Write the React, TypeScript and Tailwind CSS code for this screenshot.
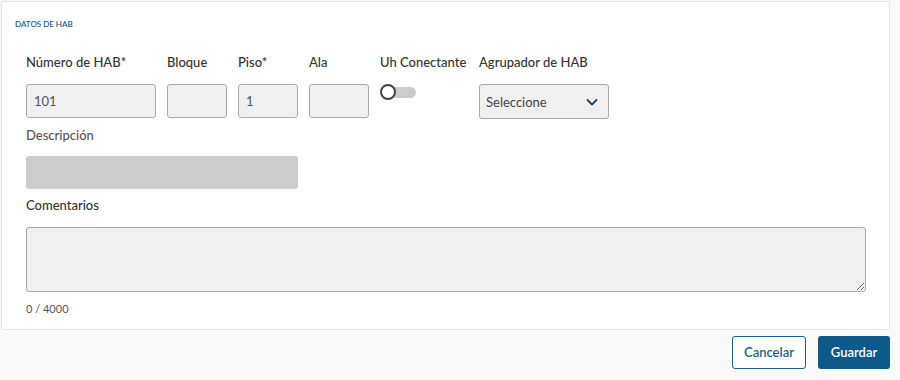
import { useState } from 'react';

const labelCls = 'block text-[13px] leading-[16px] font-medium text-[#333]';
const inputCls =
  'h-[34px] w-full rounded-[3px] border border-[#a9a9a9] bg-[#f0f0f0] px-[7px] text-[13px] text-[#555] outline-none';

function Field({ label, width, value }: { label: string; width: string; value?: string }) {
  return (
    <div className={width}>
      <label className={labelCls}>{label}</label>
      <input className={`mt-[14px] ${inputCls}`} defaultValue={value} />
    </div>
  );
}

export default function App() {
  const [connected, setConnected] = useState(false);
  const [comment, setComment] = useState('');

  return (
    <div
      className="h-[380px] w-[900px] bg-[#f9f9f9] pl-px pt-px"
      style={{ fontFamily: 'Lato, "Open Sans", sans-serif' }}
    >
      {/* Card */}
      <div className="h-[329px] w-[889px] rounded-[3px] border border-[#e3e3e3] bg-white pl-[13px] pt-[17px]">
        <p className="text-[8px] leading-[10px] font-semibold uppercase text-[#2b5b7f]">Datos de HAB</p>

        <div className="pl-[11px]">
          {/* Row 1 */}
          <div className="mt-[25px] flex gap-[11px]">
            <Field label="Número de HAB*" width="w-[130px]" value="101" />
            <Field label="Bloque" width="w-[60px]" />
            <Field label="Piso*" width="w-[60px]" value="1" />
            <Field label="Ala" width="w-[60px]" />
            <div className="w-[88px]">
              <label className={`${labelCls} whitespace-nowrap`}>Uh Conectante</label>
              <button
                type="button"
                onClick={() => setConnected(!connected)}
                className="relative mt-[14px] block h-[16px] w-[36px]"
              >
                <span className="absolute left-[6px] top-[3px] h-[11px] w-[30px] rounded-full bg-[#cccccc]" />
                <span
                  className={`absolute top-0 h-[16px] w-[16px] rounded-full border-2 border-[#444] bg-white ${
                    connected ? 'left-[20px]' : 'left-0'
                  }`}
                />
              </button>
            </div>
            <div className="w-[130px]">
              <label className={labelCls}>Agrupador de HAB</label>
              <div className="mt-[14px] flex h-[35px] items-center justify-between rounded-[3px] border border-[#a9a9a9] bg-[#f0f0f0] pl-[6px] pr-[10px] text-[13px] text-[#444]">
                <span className="pt-[2px]">Seleccione</span>
                <svg width="12" height="8" viewBox="0 0 12 8" fill="none">
                  <polyline points="1,1.5 6,6.5 11,1.5" stroke="#1f3f5a" strokeWidth="1.8" />
                </svg>
              </div>
            </div>
          </div>

          {/* Descripción */}
          <label className="mt-[8px] block text-[13px] leading-[16px] font-medium text-[#555]">Descripción</label>
          <div className="mt-[13px] h-[33px] w-[272px] rounded-[3px] bg-[#cccccc]" />

          {/* Comentarios */}
          <label className={`mt-[8px] ${labelCls}`}>Comentarios</label>
          <textarea
            value={comment}
            onChange={(e) => setComment(e.target.value)}
            className="mt-[14px] block h-[65px] w-[840px] rounded-[3px] border border-[#a9a9a9] bg-[#f0f0f0] px-[7px] py-[5px] text-[13px] text-[#555] outline-none"
          />
          <p className="mt-[9px] text-[11px] leading-[16px] text-[#555]">{comment.length} / 4000</p>
        </div>
      </div>

      {/* Actions */}
      <div className="mt-[6px] flex w-[889px] justify-end gap-[12px]">
        <button className="h-[33px] w-[74px] rounded-[3px] border border-[#1b5f8c] bg-white text-[13px] font-semibold text-[#1b5f8c]">
          Cancelar
        </button>
        <button className="h-[33px] w-[72px] rounded-[3px] bg-[#0d5a8a] text-[13px] font-semibold text-white">
          Guardar
        </button>
      </div>
    </div>
  );
}
